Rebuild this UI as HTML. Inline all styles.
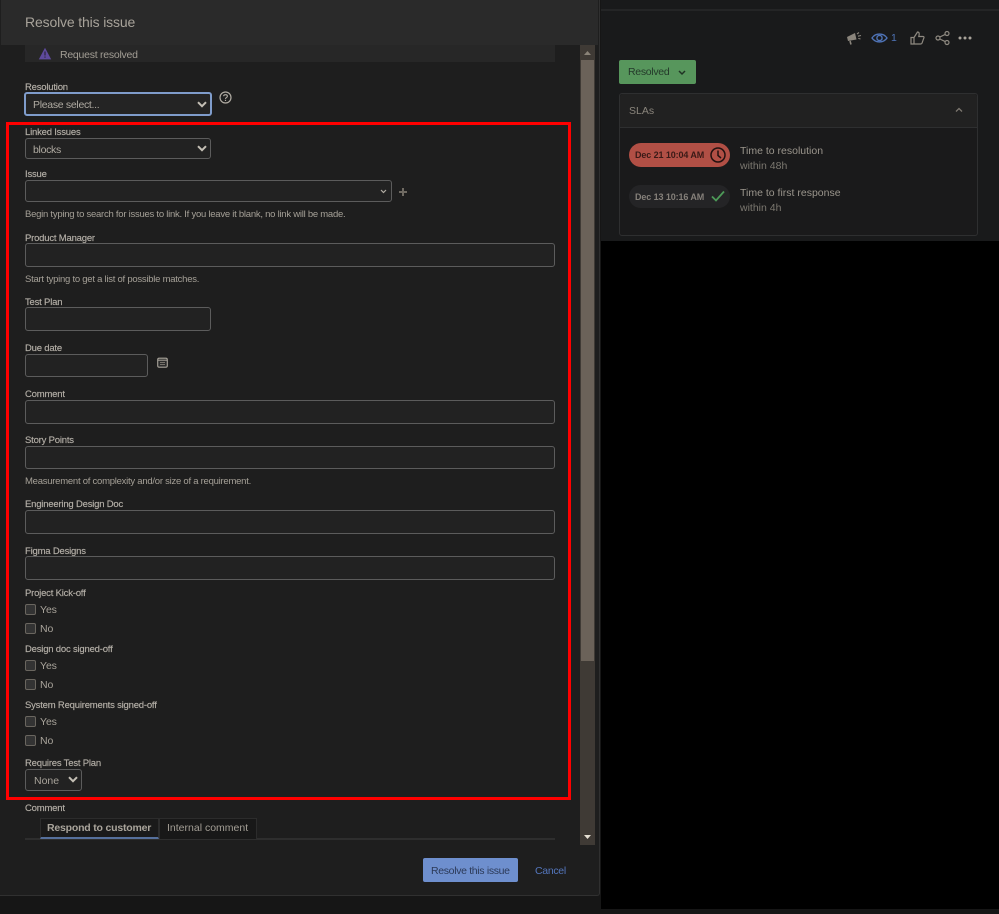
<!DOCTYPE html>
<html><head><meta charset="utf-8"><title>Resolve this issue</title>
<style>
html,body{margin:0;padding:0}
body{width:999px;height:914px;background:#161616;position:relative;overflow:hidden;font-family:"Liberation Sans",sans-serif;color:#b8b3aa}
.a{position:absolute}
.l{position:absolute;left:25px;margin-top:1px;font-size:9.5px;letter-spacing:-.2px;color:#b5b0a8;line-height:12px;white-space:nowrap;-webkit-text-stroke:.15px #b5b0a8}
.h{position:absolute;left:25px;margin-top:1px;font-size:9.5px;letter-spacing:-.25px;color:#a5a097;line-height:12px;white-space:nowrap}
.i{position:absolute;left:25px;width:530px;box-sizing:border-box;border:1px solid #5c5c5c;border-radius:3px;background:#222}
.c{position:absolute;left:25px;width:9px;height:9px;border:1px solid #6a665f;border-radius:2px;background:#333}
.t{position:absolute;left:40px;margin-top:1px;font-size:10.5px;letter-spacing:-.1px;line-height:12px;color:#a8a39a}
.v{margin-top:1px;font-size:10.5px;letter-spacing:-.3px;line-height:12px;white-space:nowrap}
svg{position:absolute;overflow:visible}
</style></head><body>
<div class="a" style="left:601px;top:0;width:398px;height:241px;background:#191a1b"></div>
<div class="a" style="left:601px;top:9px;width:398px;height:2px;background:#242526"></div>
<div class="a" style="left:601px;top:241px;width:398px;height:668px;background:#000"></div>

<!-- modal -->
<div class="a" style="left:0;top:0;width:599px;height:895px;background:#1e1e1e;border-right:1px solid #303030;border-bottom:1px solid #303030;border-radius:0 0 3px 0"></div>
<div class="a" style="left:1px;top:0;width:597px;height:45px;background:#2a2a2a"></div>
<div class="a" style="left:25px;top:13px;font-size:14px;letter-spacing:-.15px;line-height:18px;color:#a8a39a">Resolve this issue</div>
<div class="a" style="left:25px;top:45px;width:530px;height:17px;background:#272727"></div>
<svg style="left:38px;top:47px" width="14" height="13" viewBox="0 0 14 13"><path d="M7 .8 13.2 12.4H.8Z" fill="#5f4a9c"/><rect x="6.4" y="4.5" width="1.2" height="4" fill="#2a2438"/><rect x="6.4" y="9.5" width="1.2" height="1.2" fill="#2a2438"/></svg>
<div class="a v" style="left:60px;top:48px;letter-spacing:-.25px;color:#a39e95">Request resolved</div>

<!-- scrollbar -->
<div class="a" style="left:580px;top:45px;width:15px;height:800px;background:#3f3a35"></div>
<div class="a" style="left:581px;top:60px;width:13px;height:601px;background:#6b6259"></div>
<svg style="left:583px;top:50px" width="9" height="6"><path d="M4.5 1 8 5H1Z" fill="#8a8378"/></svg>
<svg style="left:583px;top:834px" width="9" height="6"><path d="M1 1H8L4.5 5Z" fill="#e6e0d4"/></svg>

<div class="l" style="top:81px">Resolution</div>
<div class="a" style="left:24px;top:92px;width:188px;height:24px;box-sizing:border-box;border:2px solid #7f9ccb;border-radius:3px;background:#242424"></div>
<div class="a v" style="left:33px;top:98px;color:#b0aba2">Please select...</div>
<svg style="left:197px;top:101px" width="10" height="7"><path d="M1 1.2 5 5.2 9 1.2" fill="none" stroke="#c4bfb5" stroke-width="2"/></svg>
<svg style="left:219px;top:91px" width="13" height="13" viewBox="0 0 13 13"><circle cx="6.5" cy="6.5" r="5.5" fill="none" stroke="#b0aba2" stroke-width="1.2"/><path d="M4.6 5.2C4.7 3.2 8.4 3.2 8.4 5.2 8.4 6.5 6.5 6.5 6.5 8" fill="none" stroke="#b0aba2" stroke-width="1.1"/><rect x="5.9" y="8.8" width="1.2" height="1.2" fill="#b0aba2"/></svg>

<div class="l" style="top:126px">Linked Issues</div>
<div class="i" style="top:138px;width:186px;height:21px"></div>
<div class="a v" style="left:33px;top:143px;color:#b0aba2">blocks</div>
<svg style="left:197px;top:145px" width="10" height="7"><path d="M1 1.2 5 5.2 9 1.2" fill="none" stroke="#c4bfb5" stroke-width="2"/></svg>

<div class="l" style="top:168px">Issue</div>
<div class="i" style="top:180px;width:367px;height:22px"></div>
<svg style="left:380px;top:189px" width="7" height="5"><path d="M1 1 3.5 3.5 6 1" fill="none" stroke="#b0aba2" stroke-width="1.2"/></svg>
<svg style="left:398px;top:187px" width="10" height="10"><path d="M5 1V9M1 5H9" stroke="#6f6a62" stroke-width="2"/></svg>
<div class="h" style="top:208px">Begin typing to search for issues to link. If you leave it blank, no link will be made.</div>

<div class="l" style="top:232px">Product Manager</div>
<div class="i" style="top:243px;height:24px"></div>
<div class="h" style="top:273px">Start typing to get a list of possible matches.</div>

<div class="l" style="top:296px">Test Plan</div>
<div class="i" style="top:307px;width:186px;height:24px"></div>

<div class="l" style="top:342px">Due date</div>
<div class="i" style="top:354px;width:123px;height:23px"></div>
<svg style="left:157px;top:357px" width="11" height="11" viewBox="0 0 11 11"><rect x=".7" y="1.2" width="9.6" height="9" rx="1.5" fill="#2c2c2c" stroke="#a8a39a" stroke-width="1.1"/><path d="M1 3.2H10" stroke="#a8a39a"/><path d="M3 5.5H8M3 7.5H8" stroke="#77736c"/></svg>

<div class="l" style="top:388px">Comment</div>
<div class="i" style="top:400px;height:24px"></div>

<div class="l" style="top:434px">Story Points</div>
<div class="i" style="top:446px;height:23px"></div>
<div class="h" style="top:475px">Measurement of complexity and/or size of a requirement.</div>

<div class="l" style="top:498px">Engineering Design Doc</div>
<div class="i" style="top:510px;height:24px"></div>

<div class="l" style="top:545px">Figma Designs</div>
<div class="i" style="top:556px;height:24px"></div>

<div class="l" style="top:587px">Project Kick-off</div>
<div class="c" style="top:604px"></div><div class="t" style="top:603px">Yes</div>
<div class="c" style="top:623px"></div><div class="t" style="top:622px">No</div>

<div class="l" style="top:643px">Design doc signed-off</div>
<div class="c" style="top:660px"></div><div class="t" style="top:659px">Yes</div>
<div class="c" style="top:679px"></div><div class="t" style="top:678px">No</div>

<div class="l" style="top:699px">System Requirements signed-off</div>
<div class="c" style="top:716px"></div><div class="t" style="top:715px">Yes</div>
<div class="c" style="top:735px"></div><div class="t" style="top:734px">No</div>

<div class="l" style="top:757px">Requires Test Plan</div>
<div class="i" style="top:769px;width:57px;height:22px"></div>
<div class="a v" style="left:34px;top:774px;letter-spacing:0;color:#a8a39a">None</div>
<svg style="left:68px;top:776px" width="10" height="7"><path d="M1 1.2 5 5.2 9 1.2" fill="none" stroke="#c4bfb5" stroke-width="2"/></svg>

<!-- red highlight -->
<div class="a" style="left:6px;top:122px;width:565px;height:678px;box-sizing:border-box;border:3.5px solid #f00"></div>

<div class="l" style="top:802px">Comment</div>
<div class="a" style="left:25px;top:838px;width:530px;height:2px;background:#2e2e2e"></div>
<div class="a" style="left:40px;top:818px;width:119px;height:21px;box-sizing:border-box;background:#1a1a1a;border:1px solid #2c2c2c;border-bottom:2px solid #56709c"></div>
<div class="a" style="left:47px;top:822px;font-size:10.5px;font-weight:700;letter-spacing:-.2px;line-height:13px;color:#aaa59c">Respond to customer</div>
<div class="a" style="left:159px;top:818px;width:98px;height:21px;box-sizing:border-box;background:#181818;border:1px solid #2c2c2c;border-bottom:0"></div>
<div class="a" style="left:167px;top:822px;font-size:10.5px;line-height:13px;color:#a39e95">Internal comment</div>

<div class="a" style="left:423px;top:858px;width:95px;height:24px;background:#6e8fce;border-radius:2px"></div>
<div class="a v" style="left:431px;top:864px;letter-spacing:-.33px;color:#2c3a58">Resolve this issue</div>
<div class="a v" style="left:535px;top:864px;color:#5476bd">Cancel</div>

<!-- right panel toolbar -->
<svg style="left:846px;top:30px" width="16" height="16" viewBox="0 0 16 16"><path d="M1 7 9 3 10.5 9.5 2 11Z" fill="#8a857c"/><path d="M4 11 5 14.5" stroke="#8a857c" stroke-width="1.6"/><path d="M11 4 13 2.5M12 6.2 15 5.5M12.3 8.4 14.5 9" stroke="#8a857c" stroke-width="1.1"/></svg>
<svg style="left:871px;top:31px" width="17" height="14" viewBox="0 0 17 14"><path d="M1 7C4.5 1.8 12.5 1.8 16 7 12.5 12.2 4.5 12.2 1 7Z" fill="none" stroke="#4f74b8" stroke-width="1.4"/><circle cx="8.5" cy="7" r="2.6" fill="none" stroke="#4f74b8" stroke-width="1.4"/></svg>
<div class="a" style="left:891px;top:32px;font-size:10.5px;line-height:12px;color:#4f74b8">1</div>
<svg style="left:910px;top:31px" width="15" height="14" viewBox="0 0 15 14"><path d="M1 6.5H4V13H1ZM4 6.5 7.5 1C9.5 1 9.5 3 8.8 5.5H13.2C14.2 5.5 14.2 6.8 13.6 7.6L12 12.2C11.7 13 11.2 13 10.5 13H4" fill="none" stroke="#8f8a81" stroke-width="1.2"/></svg>
<svg style="left:935px;top:31px" width="15" height="14" viewBox="0 0 15 14"><circle cx="3" cy="7" r="2" fill="none" stroke="#8f8a81" stroke-width="1.2"/><circle cx="12" cy="2.5" r="2" fill="none" stroke="#8f8a81" stroke-width="1.2"/><circle cx="12" cy="11.5" r="2" fill="none" stroke="#8f8a81" stroke-width="1.2"/><path d="M4.8 6 10.2 3.4M4.8 8 10.2 10.6" stroke="#8f8a81" stroke-width="1.2"/></svg>
<svg style="left:958px;top:36px" width="14" height="4"><circle cx="2" cy="2" r="1.5" fill="#a8a39a"/><circle cx="7" cy="2" r="1.5" fill="#a8a39a"/><circle cx="12" cy="2" r="1.5" fill="#a8a39a"/></svg>

<div class="a" style="left:619px;top:60px;width:77px;height:24px;background:#57965c;border-radius:2px"></div>
<div class="a v" style="left:628px;top:65px;color:#24392a">Resolved</div>
<svg style="left:678px;top:70px" width="8" height="6"><path d="M1 1 4 4 7 1" fill="none" stroke="#1f3324" stroke-width="1.5"/></svg>

<div class="a" style="left:619px;top:93px;width:359px;height:143px;box-sizing:border-box;border:1px solid #2e2f30;border-radius:3px;background:#1a1a1b"></div>
<div class="a" style="left:620px;top:94px;width:357px;height:33px;background:#212121;border-bottom:1px solid #2e2f30;border-radius:3px 3px 0 0"></div>
<div class="a" style="left:629px;top:105px;font-size:10.5px;line-height:12px;color:#8a857c">SLAs</div>
<svg style="left:955px;top:107px" width="8" height="6"><path d="M1 4.5 4 1.5 7 4.5" fill="none" stroke="#7d7870" stroke-width="1.3"/></svg>

<div class="a" style="left:629px;top:143px;width:101px;height:24px;border-radius:12px;background:#b14f45"></div>
<div class="a" style="left:635px;top:149px;font-size:9px;font-weight:700;letter-spacing:-.1px;line-height:12px;white-space:nowrap;color:#3a1a17">Dec 21 10:04 AM</div>
<svg style="left:709px;top:146px" width="18" height="18" viewBox="0 0 18 18"><circle cx="9" cy="9" r="7" fill="none" stroke="#221110" stroke-width="1.5"/><path d="M9 4.5V9.5L12 12" fill="none" stroke="#221110" stroke-width="1.5"/></svg>
<div class="a" style="left:740px;top:145px;font-size:10.5px;line-height:12px;color:#9a958c">Time to resolution</div>
<div class="a" style="left:740px;top:160px;font-size:10.5px;line-height:12px;color:#7c7870">within 48h</div>

<div class="a" style="left:629px;top:185px;width:101px;height:23px;border-radius:12px;background:#242426"></div>
<div class="a" style="left:635px;top:191px;font-size:9px;font-weight:700;letter-spacing:-.1px;line-height:12px;white-space:nowrap;color:#85807a">Dec 13 10:16 AM</div>
<svg style="left:711px;top:190px" width="14" height="12" viewBox="0 0 14 12"><path d="M1 6.5 5 10.5 13 1.5" fill="none" stroke="#4d9a58" stroke-width="1.8"/></svg>
<div class="a" style="left:740px;top:187px;font-size:10.5px;line-height:12px;color:#9a958c">Time to first response</div>
<div class="a" style="left:740px;top:202px;font-size:10.5px;line-height:12px;color:#7c7870">within 4h</div>
</body></html>
